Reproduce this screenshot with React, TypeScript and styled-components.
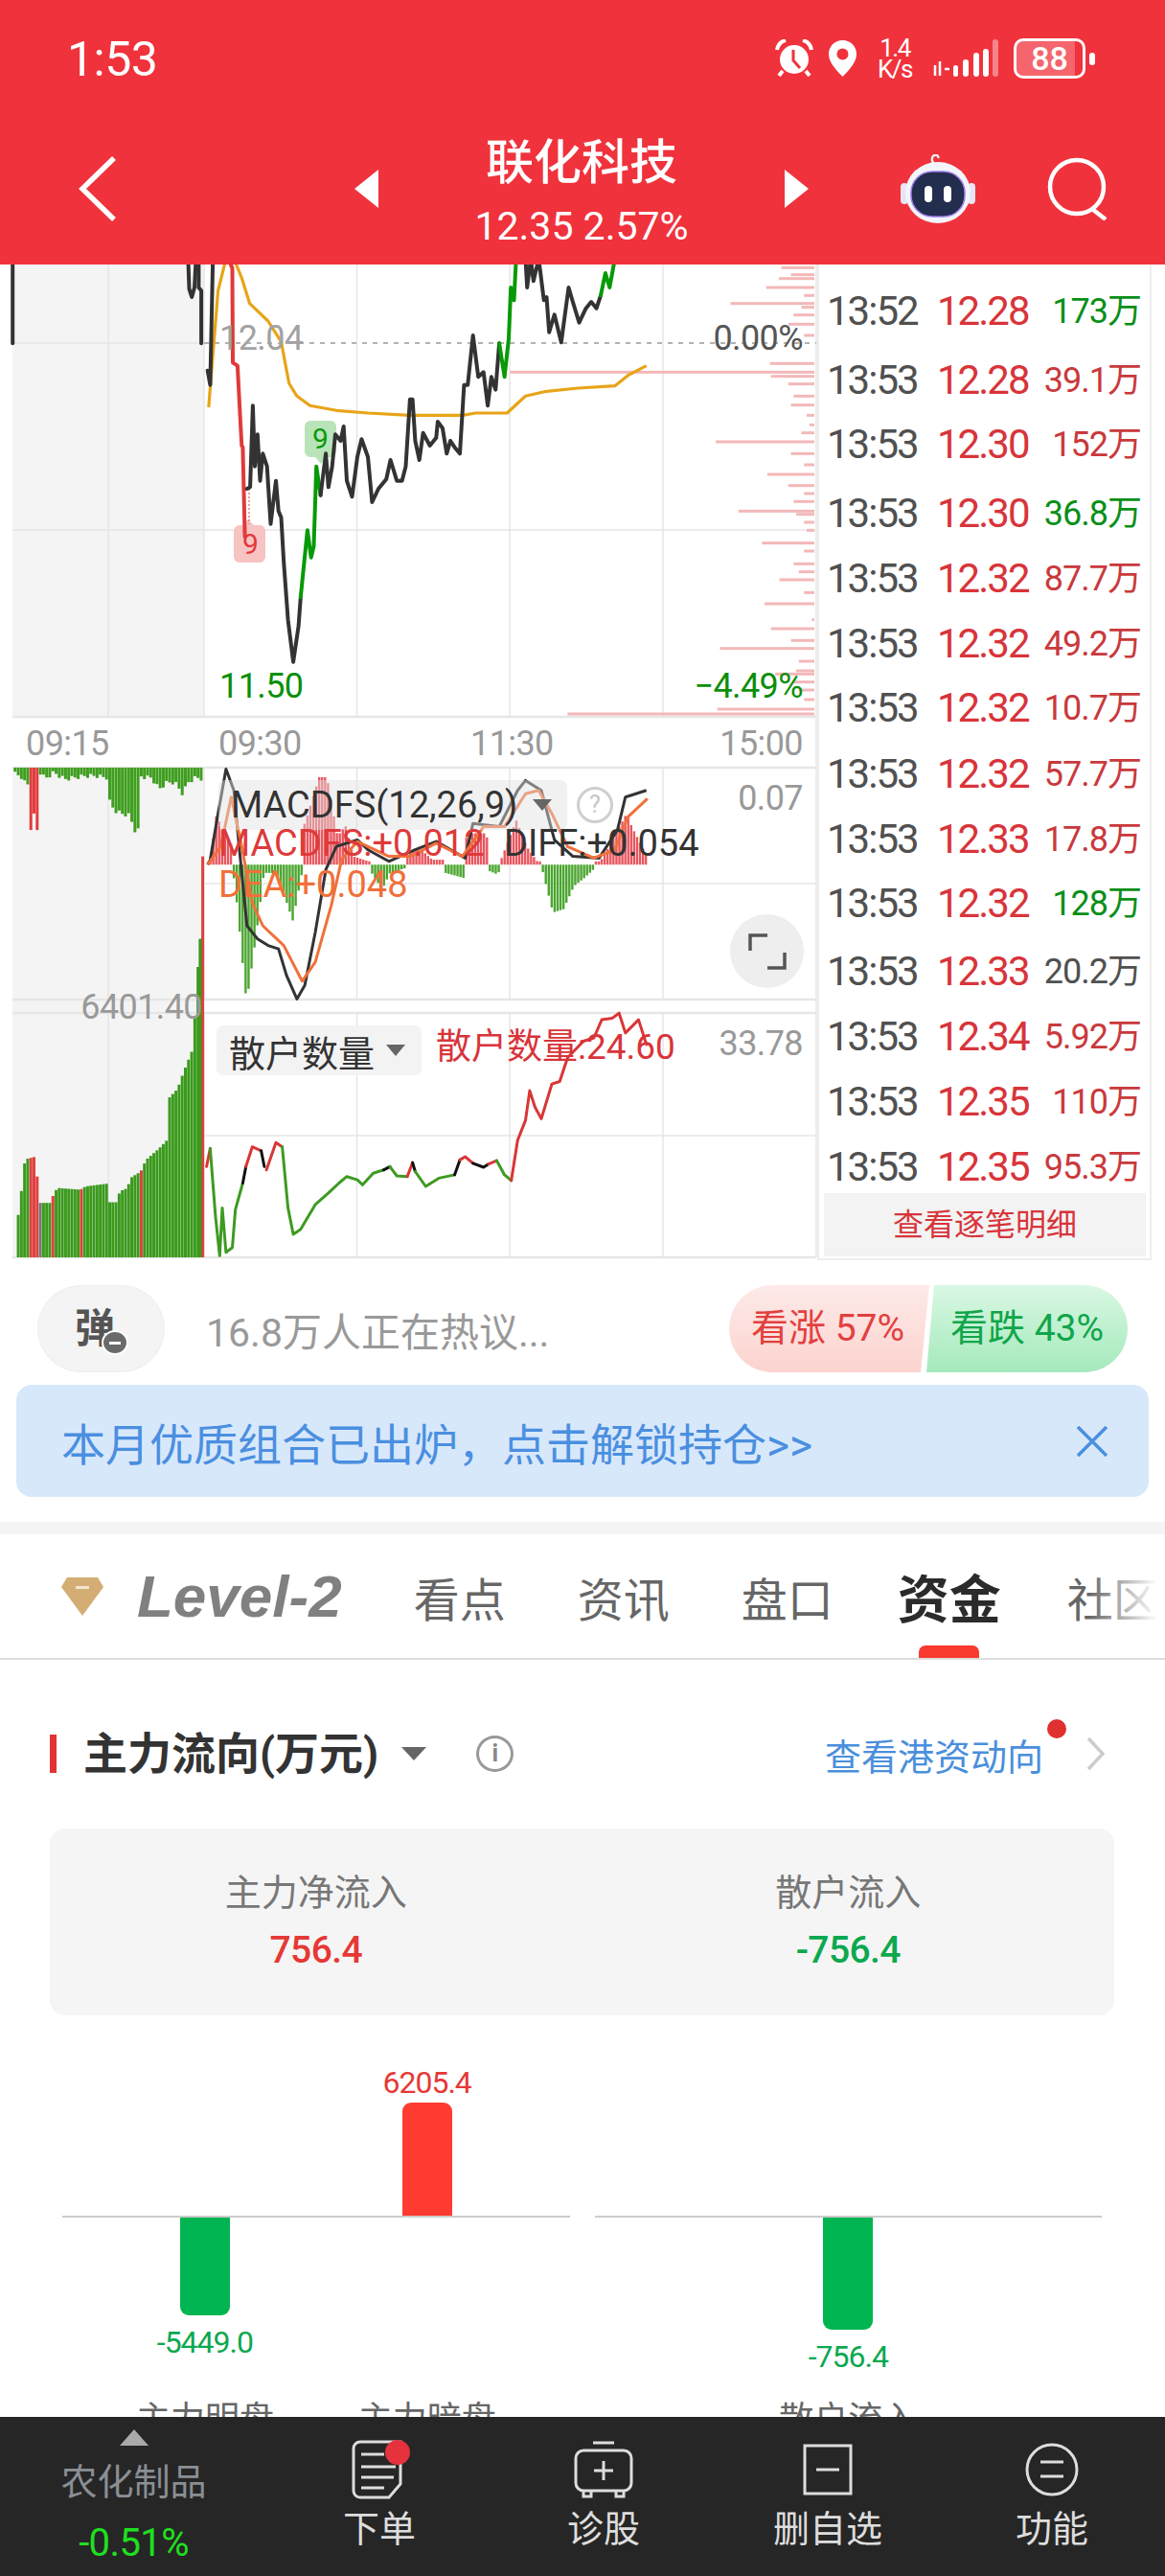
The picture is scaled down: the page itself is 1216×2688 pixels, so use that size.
import React from "react";
import styled, { createGlobalStyle } from "styled-components";

const Global = createGlobalStyle`
  html, body { margin: 0; padding: 0; background: #fff; }
  body { font-family: Roboto, "Noto Sans CJK SC", sans-serif; }
  * { box-sizing: border-box; }
`;

const Page = styled.div`
  width: 1216px; height: 2688px; display: flex; flex-direction: column; overflow: hidden; background: #fff;
`;
const Scroll = styled.div`
  flex: 1; min-height: 0; overflow: hidden;
`;

/* ---------- header ---------- */
const Header = styled.header`
  height: 276px; background: #f0323c; color: #fff; display: flex; flex-direction: column;
`;
const StatusBar = styled.div`
  height: 118px; padding: 40px 74px 0 70px; display: flex; align-items: flex-start; justify-content: space-between;
`;
const Clock = styled.div`
  font-size: 50px; line-height: 44px; letter-spacing: -0.5px;
`;
const StatusIcons = styled.div`
  display: flex; align-items: center; height: 42px;
`;
const StatusIcon = styled.svg<{ $ml?: number }>`
  display: block; margin-left: ${(p) => p.$ml ?? 0}px;
`;
const Speed = styled.div`
  margin-left: 20px; width: 38px; font-size: 26px; line-height: 22px; text-align: center; letter-spacing: -1.5px;
`;
const Battery = styled.div`
  position: relative; margin-left: 16px; width: 75px; height: 42px; border: 3px solid #fff; border-radius: 10px;
  font-size: 34px; font-weight: 500; line-height: 36px; text-align: center;
  &::before { content: ""; position: absolute; left: 0; top: 0; bottom: 0; width: 88%; background: rgba(255,255,255,.25); border-radius: 6px 0 0 6px; }
  &::after { content: ""; position: absolute; right: -13px; top: 12px; width: 6px; height: 13px; background: #fff; border-radius: 3px; }
`;
const BatteryText = styled.span`
  position: relative;
`;
const StatusEnd = styled.div`
  width: 9px;
`;
const NavBar = styled.div`
  height: 158px; display: flex; align-items: center;
`;
const NavIcon = styled.svg<{ $ml: number }>`
  display: block; flex: none; margin-left: ${(p) => p.$ml}px;
`;
const Switcher = styled.div`
  margin-left: 248px; width: 474px; display: flex; align-items: center; justify-content: space-between;
`;
const TitleBlock = styled.div`
  text-align: center; margin-top: 6px;
`;
const StockName = styled.div`
  font-size: 50px; line-height: 58px; font-weight: 500;
`;
const StockQuote = styled.div`
  font-size: 41px; line-height: 46px; margin-top: 14px;
`;

/* ---------- chart + ticks ---------- */
const MarketRow = styled.section`
  height: 1039px; display: flex;
`;
const ChartPane = styled.div`
  position: relative; width: 853px; height: 1039px; flex: none; overflow: hidden;
`;
const ChartSvg = styled.svg`
  display: block;
`;
const ChartText = styled.span<{ $l?: number; $r?: number; $t: number; $c: string; $s?: number; $w?: number }>`
  position: absolute; top: ${(p) => p.$t}px;
  ${(p) => (p.$l !== undefined ? `left:${p.$l}px;` : `right:${p.$r}px;`)}
  color: ${(p) => p.$c}; font-size: ${(p) => p.$s ?? 36}px; line-height: 1; font-weight: ${(p) => p.$w ?? 400}; white-space: nowrap;
`;
const TightNum = styled(ChartText)`
  letter-spacing: -0.6px;
`;
const IndicatorChip = styled.div<{ $l: number; $t: number; $w: number; $h: number; $ghost?: boolean }>`
  position: absolute; left: ${(p) => p.$l}px; top: ${(p) => p.$t}px; width: ${(p) => p.$w}px; height: ${(p) => p.$h}px;
  background: ${(p) => (p.$ghost ? "rgba(225,225,225,.45)" : "#f3f3f3")}; border-radius: 7px;
  display: flex; align-items: center; padding-left: 13px; color: #333; font-size: 38px; white-space: nowrap;
`;
const ChipCaret = styled.i<{ $ml: number }>`
  display: block; margin-left: ${(p) => p.$ml}px; width: 0; height: 0;
  border-left: 10px solid transparent; border-right: 10px solid transparent; border-top: 12px solid #666;
`;
const HelpCircle = styled.div`
  position: absolute; left: 602px; top: 545px; width: 38px; height: 38px; border-radius: 50%;
  border: 3px solid #cfcfcf; color: #c6c6c6; font-size: 25px; line-height: 32px; text-align: center;
`;
const ExpandButton = styled.div`
  position: absolute; left: 762px; top: 678px; width: 77px; height: 77px; border-radius: 50%; background: #eeeeee;
  display: flex; align-items: center; justify-content: center;
`;

const TickColumn = styled.div`
  width: 349px; height: 1039px; flex: none; border-left: 2px solid #eee; border-right: 2px solid #eee; border-bottom: 2px solid #eee;
  padding-top: 31px; display: flex; flex-direction: column;
`;
const TickRow = styled.div<{ $h: number }>`
  flex: none; height: ${(p) => p.$h}px; display: grid; grid-template-columns: 115px 1fr auto; padding: 0 9px 0 8px; line-height: 36px;
`;
const TickTime = styled.span`
  font-size: 42px; letter-spacing: -2px; color: #505050;
`;
const TickPrice = styled.span`
  font-size: 42px; letter-spacing: -2px; color: #d8343a;
`;
const TickVol = styled.span<{ $c: string }>`
  font-size: 36px; letter-spacing: -1px; color: ${(p) => p.$c};
`;
const DetailButton = styled.div`
  margin: auto 4px 2px 5px; height: 66px; background: #f3f3f3; color: #d8343a; font-size: 32px; line-height: 66px; text-align: center;
`;

/* ---------- social ---------- */
const SocialRow = styled.div`
  margin-top: 26px; height: 91px; display: flex; align-items: center; padding: 0 39px;
`;
const DanmuButton = styled.div`
  position: relative; width: 133px; height: 91px; border-radius: 46px; background: #f4f4f4; border: 1px solid #eee;
  color: #555; font-size: 42px; font-weight: 700; line-height: 89px; padding-left: 38px;
`;
const DanmuBadge = styled.i`
  position: absolute; left: 66px; top: 46px; width: 28px; height: 26px; border-radius: 50%; background: #6a6a6a; border: 2px solid #fff;
  &::after { content: ""; position: absolute; left: 6px; right: 6px; top: 10px; height: 3px; background: #fff; }
`;
const HotText = styled.div`
  margin-left: 43px; font-size: 41px; color: #999; white-space: nowrap;
`;
const Sentiment = styled.div`
  margin-left: auto; display: flex; height: 91px;
`;
const BullSide = styled.div`
  width: 209px; border-radius: 46px 0 0 46px; background: linear-gradient(#fdeae8, #fcd3cf);
  clip-path: polygon(0 0, 100% 0, calc(100% - 9px) 100%, 0 100%);
  color: #e2403e; font-size: 39px; line-height: 91px; padding-left: 23px; white-space: nowrap;
`;
const BearSide = styled.div`
  margin-left: -3px; width: 210px; border-radius: 0 46px 46px 0; background: linear-gradient(#daf8e4, #a4e9bb);
  clip-path: polygon(8px 0, 100% 0, 100% 100%, 0 100%);
  color: #10a54b; font-size: 39px; line-height: 91px; padding-left: 25px; white-space: nowrap;
`;
const Banner = styled.div`
  margin: 13px 17px 0; height: 117px; border-radius: 16px; background: #d8e8fb; display: flex; align-items: center;
  justify-content: space-between; padding: 0 42px 0 47px; color: #4a8fe0; font-size: 46px; white-space: nowrap;
`;
const Separator = styled.div`
  margin-top: 26px; height: 13px; background: #f4f4f4;
`;

/* ---------- tabs ---------- */
const TabBar = styled.nav`
  position: relative; height: 131px; border-bottom: 2px solid #ddd; display: flex; align-items: center; padding-left: 64px; overflow: hidden;
  &::after { content: ""; position: absolute; right: 0; top: 0; bottom: 0; width: 80px; background: linear-gradient(90deg, rgba(255,255,255,0), #fff 90%); }
`;
const Diamond = styled.svg`
  display: block; flex: none;
`;
const LevelMark = styled.span`
  flex: none; margin-left: 35px; margin-right: 75px; font-family: "Liberation Sans", sans-serif; font-size: 62px; font-weight: 700; font-style: italic; color: #808080; white-space: nowrap;
`;
const Tab = styled.span<{ $active?: boolean }>`
  position: relative; flex: none; height: 129px; display: flex; align-items: center; margin-right: 75px;
  font-size: ${(p) => (p.$active ? 54 : 48)}px; font-weight: ${(p) => (p.$active ? 700 : 400)}; color: ${(p) => (p.$active ? "#2b2b2b" : "#666")};
  ${(p) => (p.$active ? "margin-left:-8px; margin-right:69px;" : "")}
`;
const TabMark = styled.i`
  position: absolute; left: 22px; right: 23px; bottom: 0; height: 13px; background: #f93a2f; border-radius: 7px 7px 0 0;
`;

/* ---------- funds ---------- */
const FundSection = styled.section`
  padding: 78px 53px 0 52px;
`;
const FundHead = styled.div`
  height: 40px; display: flex; align-items: center; border-left: 7px solid #e03333; padding: 0 8px 0 28px;
`;
const FundTitle = styled.h2`
  margin: 0; font-size: 46px; font-weight: 700; color: #333; line-height: 40px; white-space: nowrap;
`;
const TitleCaret = styled.i`
  display: block; margin-left: 24px; width: 0; height: 0; border-left: 13px solid transparent; border-right: 13px solid transparent; border-top: 14px solid #666;
`;
const InfoCircle = styled.div`
  margin-left: 52px; width: 39px; height: 38px; border-radius: 50%; border: 3px solid #999; color: #888; font-size: 25px; font-weight: 700; line-height: 32px; text-align: center;
`;
const HarborLink = styled.div`
  position: relative; margin-left: auto; display: flex; align-items: center; color: #4a8fdc; font-size: 38px; white-space: nowrap;
`;
const RedDot = styled.i`
  position: absolute; left: 232px; top: -9px; width: 20px; height: 20px; border-radius: 50%; background: #e03030;
`;
const LinkChevron = styled.svg`
  display: block; margin-left: 44px;
`;
const Summary = styled.div`
  margin-top: 58px; height: 195px; border-radius: 16px; background: #f5f5f5; display: grid; grid-template-columns: 1fr 1fr; padding-top: 44px; text-align: center;
`;
const SummaryLabel = styled.div`
  font-size: 38px; line-height: 46px; color: #777;
`;
const SummaryValue = styled.div<{ $c: string }>`
  margin-top: 17px; font-size: 39px; line-height: 40px; letter-spacing: -0.6px; font-weight: 500; color: ${(p) => p.$c};
`;
const BarsRow = styled.div`
  display: flex; gap: 26px; padding: 0 13px;
`;
const BarPanel = styled.div<{ $cols: number; $pad: number }>`
  width: 530px; display: grid; grid-template-columns: repeat(${(p) => p.$cols}, 1fr); padding: 0 ${(p) => p.$pad}px;
  background: linear-gradient(#ccc, #ccc) 0 209px / 100% 2px no-repeat;
`;
const BarCol = styled.div`
  display: flex; flex-direction: column; align-items: center;
`;
const UpperHalf = styled.div`
  height: 209px; display: flex; flex-direction: column; justify-content: flex-end; align-items: center;
`;
const LowerHalf = styled.div`
  margin-top: 2px; height: 193px; display: flex; flex-direction: column; align-items: center;
`;
const BarValue = styled.div<{ $c: string }>`
  font-size: 32px; line-height: 32px; letter-spacing: -1px; color: ${(p) => p.$c}; margin: 12px 0 5px;
`;
const Bar = styled.div<{ $h: number; $up?: boolean }>`
  width: 52px; height: ${(p) => p.$h}px; background: ${(p) => (p.$up ? "#ff3b30" : "#00b551")};
  border-radius: ${(p) => (p.$up ? "9px 9px 0 0" : "0 0 9px 9px")};
`;
const BarLabel = styled.div`
  font-size: 36px; line-height: 36px; color: #666; white-space: nowrap;
`;

/* ---------- footer ---------- */
const Footer = styled.footer`
  flex: none; height: 166px; background: #262626; display: grid; grid-template-columns: 279px repeat(4, 234px);
`;
const SectorCell = styled.div`
  display: flex; flex-direction: column; align-items: center; padding-top: 13px;
`;
const UpCaret = styled.i`
  display: block; width: 0; height: 0; border-left: 15px solid transparent; border-right: 15px solid transparent; border-bottom: 17px solid #aaa;
`;
const SectorName = styled.div`
  margin-top: 15px; font-size: 38px; line-height: 46px; color: #8a8f94;
`;
const SectorChange = styled.div`
  margin-top: 21px; font-size: 40px; line-height: 40px; letter-spacing: -0.6px; color: #1fe01f;
`;
const ActionCell = styled.div`
  position: relative; display: flex; flex-direction: column; align-items: center; padding-top: 24px;
`;
const ActionIconBox = styled.div`
  height: 62px; display: flex; align-items: center; justify-content: center;
`;
const ActionLabel = styled.div`
  margin-top: 8px; font-size: 38px; line-height: 46px; color: #ddd; white-space: nowrap;
`;
const ActionDot = styled.i`
  position: absolute; left: 123px; top: 24px; width: 26px; height: 26px; border-radius: 50%; background: #e5323c;
`;

/* ---------- chart data (page space) ---------- */
type P = [number, number];
const X = 1.823;
const a = (x: number, y: number): P => [x / X, 270 + y / 3 - 276];
const b = (x: number, y: number): P => [x / X, 780 + y / 2.904 - 276];
const path = (arr: number[], f: (x: number, y: number) => P) => {
  const o: string[] = [];
  for (let i = 0; i < arr.length; i += 2) {
    const [x, y] = f(arr[i], arr[i + 1]);
    o.push(`${x.toFixed(1)},${y.toFixed(1)}`);
  }
  return o.join(" ");
};
const interp = (prof: number[], x: number) => {
  for (let i = 0; i < prof.length - 2; i += 2) {
    if (x >= prof[i] && x <= prof[i + 2]) {
      const t = (x - prof[i]) / Math.max(1, prof[i + 2] - prof[i]);
      return prof[i + 1] + (prof[i + 3] - prof[i + 1]) * t;
    }
  }
  return null;
};

const RED = "#e03a3a", GREEN = "#079a07", INK = "#333333";
const priceSegs: [string, number[]][] = [
  [INK, [24, 0, 24, 265]],
  [INK, [358, 0, 360, 95, 365, 120, 370, 90, 373, 0]],
  [INK, [378, 0, 378, 90, 383, 100, 383, 265]],
  [INK, [395, 350, 400, 395, 405, 0]],
  [RED, [435, 0, 442, 30, 443, 325, 452, 335, 458, 525, 460, 585, 462, 590, 466, 870]],
  [INK, [470, 720, 476, 715, 481, 460, 485, 650, 490, 550, 495, 695, 500, 610, 508, 650, 515, 830, 525, 695, 530, 790, 535, 810, 540, 950, 548, 1130, 558, 1262, 568, 1150, 572, 1060]],
  [GREEN, [572, 1060, 585, 850, 592, 935, 597, 900, 602, 650, 610, 740]],
  [INK, [610, 740, 620, 610, 625, 715, 632, 650, 638, 550, 648, 570, 654, 525, 660, 695, 670, 745, 680, 620, 688, 565, 700, 620, 708, 762, 720, 720, 735, 690, 743, 630, 755, 695, 765, 695, 772, 650, 780, 440, 785, 440, 790, 570, 798, 630, 805, 545, 818, 585, 830, 560, 833, 510, 842, 530, 850, 610, 857, 570, 865, 590, 875, 610, 883, 395, 890, 395, 900, 240, 910, 370, 920, 355, 928, 460, 935, 370, 943, 410, 950, 265]],
  [GREEN, [950, 265, 960, 370, 968, 250, 972, 90, 978, 130, 982, 0]],
  [INK, [1000, 0, 1003, 90, 1010, 0, 1015, 70, 1025, 0, 1035, 130, 1040, 120, 1045, 230, 1055, 175, 1068, 262, 1082, 90, 1090, 135, 1102, 200, 1115, 155, 1125, 135, 1135, 155, 1143, 115]],
  [GREEN, [1143, 115, 1152, 45, 1160, 90, 1170, 0]],
];
const avgLine = [397, 465, 405, 300, 415, 100, 430, 0, 445, 0, 460, 60, 475, 140, 510, 195, 535, 260, 550, 390, 565, 430, 590, 460, 640, 475, 700, 483, 780, 490, 880, 490, 905, 483, 965, 483, 1000, 430, 1040, 415, 1100, 405, 1170, 398, 1195, 365, 1230, 335];
const ticks = [28, 1487, 50, 1505, 62, 1482, 90, 1458, 115, 1530, 140, 1390, 152, 1525, 176, 1510, 205, 1500, 240, 1530, 328, 1465, 355, 970, 368, 1467, 392, 1500, 430, 1510, 458, 1505, 490, 1535, 520, 1540, 545, 1525, 573, 1362, 610, 1505, 645, 1530, 675, 1460, 710, 1500, 735, 1530, 760, 1510, 790, 1405, 800, 1515, 825, 1530, 850, 1535, 890, 1450, 915, 1530, 955, 1510, 980, 1520, 1005, 1483, 1045, 1530, 1080, 1455, 1130, 1545, 1158, 1467, 1195, 1505, 1220, 1370, 1260, 1520, 1290, 1515, 1300, 1475, 1325, 1510, 1350, 1520, 1380, 1530, 1410, 1365, 1425, 1080];

const topVol = [24, 72, 40, 85, 47, 110, 54, 100, 70, 62, 83, 88, 100, 70, 120, 90, 140, 85, 160, 80, 180, 80, 200, 85, 205, 155, 215, 185, 230, 195, 245, 200, 252, 245, 260, 245, 262, 80, 275, 85, 285, 85, 300, 120, 315, 100, 330, 100, 345, 135, 355, 100, 370, 85, 385, 90];
const botVol = [28, 1445, 35, 1395, 40, 1310, 45, 1248, 65, 1240, 72, 1380, 95, 1380, 100, 1345, 110, 1335, 150, 1340, 160, 1330, 200, 1322, 205, 1378, 220, 1378, 225, 1345, 240, 1335, 245, 1305, 265, 1285, 275, 1250, 300, 1215, 315, 1190, 320, 1060, 335, 1035, 345, 990, 355, 950, 365, 910, 370, 750, 378, 580, 385, 580];
const macdUp = [398, 340, 410, 200, 420, 250, 440, 300, 500, 330, 560, 300, 580, 220, 605, 90, 620, 90, 640, 270, 655, 235, 670, 330, 700, 345, 770, 330, 785, 310, 800, 310, 820, 340, 840, 340, 860, 345, 890, 260, 920, 260, 950, 345, 980, 220, 1000, 300, 1020, 345, 1140, 345, 1150, 320, 1190, 200, 1200, 240, 1232, 340];
const macdDown = [[440, 360, 450, 490, 465, 745, 470, 740, 480, 630, 490, 510, 500, 380, 520, 380, 535, 430, 555, 525, 570, 400, 575, 360], [705, 380, 725, 430, 740, 380, 770, 365], [845, 380, 880, 395], [930, 375, 945, 385, 950, 365], [1028, 360, 1050, 500, 1070, 490, 1090, 420, 1110, 395, 1130, 365]];
const difLine = [395, 355, 400, 340, 415, 200, 430, 65, 445, 130, 455, 300, 470, 540, 490, 580, 510, 600, 530, 610, 545, 690, 565, 762, 580, 720, 600, 560, 620, 370, 640, 300, 680, 280, 700, 310, 740, 345, 790, 310, 830, 285, 885, 335, 900, 230, 950, 240, 985, 130, 1000, 100, 1030, 130, 1055, 280, 1090, 330, 1140, 335, 1175, 250, 1190, 150, 1230, 130];
const deaLine = [395, 355, 420, 300, 440, 150, 460, 300, 480, 470, 500, 540, 540, 600, 575, 708, 600, 650, 630, 480, 650, 340, 680, 285, 740, 330, 780, 330, 830, 290, 880, 330, 920, 240, 960, 240, 1000, 140, 1025, 130, 1050, 200, 1080, 300, 1130, 335, 1170, 310, 1195, 210, 1232, 155];

const G2 = "#3f9a22", R2 = "#d93636", K2 = "#111";
const retailSegs: [string, number[]][] = [
  [R2, [393, 1270, 400, 1215]],
  [G2, [400, 1215, 410, 1420, 418, 1540, 423, 1395, 430, 1530, 442, 1515, 448, 1400, 462, 1320]],
  [K2, [462, 1320, 468, 1270]],
  [R2, [468, 1270, 480, 1210, 497, 1222]],
  [K2, [497, 1222, 503, 1270]],
  [R2, [507, 1280, 525, 1197, 537, 1210]],
  [G2, [537, 1210, 548, 1395, 558, 1475, 572, 1460, 585, 1425, 600, 1385, 625, 1350, 645, 1320, 660, 1300, 680, 1310, 690, 1325, 710, 1290, 730, 1280]],
  [K2, [730, 1280, 742, 1270]],
  [G2, [742, 1270, 755, 1298, 775, 1300]],
  [R2, [775, 1300, 785, 1258]],
  [K2, [785, 1258, 790, 1285]],
  [G2, [790, 1285, 810, 1330, 835, 1305, 865, 1295]],
  [K2, [865, 1295, 875, 1250]],
  [R2, [875, 1250, 885, 1240, 900, 1260]],
  [K2, [900, 1260, 920, 1272, 930, 1262]],
  [R2, [930, 1262, 945, 1252]],
  [G2, [945, 1252, 960, 1295, 973, 1312]],
  [R2, [973, 1312, 985, 1190, 1000, 1130, 1008, 1040, 1018, 1090, 1030, 1125, 1050, 1020, 1065, 1012, 1080, 940, 1110, 890, 1130, 880, 1145, 825, 1165, 820, 1178, 805, 1190, 865, 1215, 825, 1230, 900]],
];

const volBars = () => {
  const out: React.ReactElement[] = [];
  let i = 0;
  for (let zx = 26; zx <= 382; zx += 6) {
    const px = zx / X;
    const t = interp(topVol, zx);
    const isRedTop = zx >= 55 && zx <= 68;
    if (t !== null) {
      const by = 780 + (isRedTop ? 200 + (i % 2) * 50 : t + ((i * 7) % 3) * 6) / 2.904 - 276;
      out.push(<rect key={"t" + i} x={px} y={801 - 276} width={3} height={by - 525} fill={isRedTop ? "#e03c3c" : "#3f9e1f"} />);
    }
    const v = interp(botVol, zx);
    const red = (zx >= 56 && zx <= 68) || zx === 26 || zx === 98 || zx === 152 || zx === 266;
    if (v !== null) {
      const ty = 780 + v / 2.904 - 276;
      out.push(<rect key={"b" + i} x={px} y={ty} width={3} height={1036 - ty} fill={red ? "#e04040" : zx === 74 ? "#777" : "#3a9a1c"} />);
    }
    i++;
  }
  out.push(<rect key="spike" x={383 / X} y={780 + 330 / 2.904 - 276} width={3} height={1036 - (780 + 330 / 2.904 - 276)} fill="#e04040" />);
  out.push(<rect key="spike2" x={378 / X} y={780 + 580 / 2.904 - 276} width={3} height={1036 - (780 + 580 / 2.904 - 276)} fill="#3a9a1c" />);
  return out;
};

const macdBars = () => {
  const out: React.ReactElement[] = [];
  const base = 780 + 355 / 2.904 - 276;
  let i = 0;
  for (let zx = 398; zx <= 1232; zx += 5.6) {
    const v = interp(macdUp, zx);
    let isDown = false;
    for (const seg of macdDown) {
      const d = interp(seg, zx);
      if (d !== null) {
        isDown = true;
        const y = 780 + d / 2.904 - 276;
        out.push(<rect key={"d" + i} x={zx / X} y={base} width={2.4} height={Math.max(0, y - base)} fill="#4aa52f" />);
      }
    }
    if (!isDown && v !== null) {
      const y = 780 + v / 2.904 - 276;
      out.push(<rect key={"u" + i} x={zx / X} y={y} width={2.4} height={Math.max(0, base - y)} fill="#e6454e" opacity={0.9} />);
    }
    i++;
  }
  return out;
};

const Lines = ({ segs, f, w }: { segs: [string, number[]][]; f: (x: number, y: number) => P; w: number }) => (
  <>
    {segs.map(([c, arr], i) => (
      <polyline key={i} points={path(arr, f)} fill="none" stroke={c} strokeWidth={w} strokeLinejoin="round" strokeLinecap="round" />
    ))}
  </>
);

const Chart = () => {
  const grid = "#e6e6e6";
  const top = (y: number) => y - 276;
  return (
    <ChartSvg width={853} height={1039} viewBox="0 0 853 1039">
      <rect x={13} y={0} width={200} height={top(748)} fill="#f4f4f4" />
      <rect x={13} y={top(801)} width={199} height={top(1312) - top(801)} fill="#f4f4f4" />
      {[113, 213, 372.5, 532, 692].map((x) => (
        <g key={x}>
          <line x1={x} x2={x} y1={0} y2={top(748)} stroke={grid} strokeWidth={1.5} />
          <line x1={x} x2={x} y1={top(801)} y2={top(1043)} stroke={grid} strokeWidth={1.5} />
          <line x1={x} x2={x} y1={top(1057)} y2={top(1312)} stroke={grid} strokeWidth={1.5} />
        </g>
      ))}
      <line x1={852} x2={852} y1={0} y2={top(1312)} stroke={grid} strokeWidth={1.5} />
      <line x1={13} x2={213} y1={top(358)} y2={top(358)} stroke={grid} strokeWidth={1.5} />
      <line x1={213} x2={852} y1={top(358)} y2={top(358)} stroke="#999" strokeWidth={1.5} strokeDasharray="5 6" />
      {[553, 748].map((y) => <line key={y} x1={13} x2={852} y1={top(y)} y2={top(y)} stroke={grid} strokeWidth={y === 748 ? 2.5 : 1.5} />)}
      {[801, 922, 1043, 1057, 1185, 1312].map((y) => <line key={y} x1={y === 922 || y === 1185 ? 213 : 13} x2={852} y1={top(y)} y2={top(y)} stroke={grid} strokeWidth={y === 922 || y === 1185 ? 1.5 : 2.5} />)}
      {ticks.map((_, i) => {
        if (i % 2) return null;
        const [x, y] = a(ticks[i + 1], ticks[i]);
        const w = 850 - x;
        return <rect key={i} x={x} y={y - 1.5} width={w} height={3} fill="#f3b8b8" />;
      })}
      <path d="M324 163h21a6 6 0 0 1 6 6v26a6 6 0 0 1-6 6h-4l-6 7-6-7h-5a6 6 0 0 1-6-6v-26a6 6 0 0 1 6-6z" fill="#b9e4b9" />
      <path d="M250 272h3l6-6 6 6h6a6 6 0 0 1 6 6v27a6 6 0 0 1-6 6h-21a6 6 0 0 1-6-6v-27a6 6 0 0 1 6-6z" fill="#f7c3c3" />
      <line x1={260} x2={260} y1={a(0, 720)[1]} y2={a(0, 830)[1]} stroke="#e03a3a" strokeWidth={1} strokeDasharray="2 2" />
      <polyline points={path(avgLine, a)} fill="none" stroke="#e8a418" strokeWidth={3.2} strokeLinejoin="round" />
      <Lines segs={priceSegs} f={a} w={4} />
      {volBars()}
      {macdBars()}
      <polyline points={path(difLine, b)} fill="none" stroke="#333" strokeWidth={3} strokeLinejoin="round" />
      <polyline points={path(deaLine, b)} fill="none" stroke="#f0703a" strokeWidth={3} strokeLinejoin="round" />
      <Lines segs={retailSegs} f={b} w={3} />
    </ChartSvg>
  );
};

const tickData: [string, string, string, string, number][] = [
  ["13:52", "12.28", "173万", "#0b8f18", 72],
  ["13:53", "12.28", "39.1万", "#c9393c", 67],
  ["13:53", "12.30", "152万", "#c9393c", 72],
  ["13:53", "12.30", "36.8万", "#0b8f18", 68],
  ["13:53", "12.32", "87.7万", "#c9393c", 68],
  ["13:53", "12.32", "49.2万", "#c9393c", 67],
  ["13:53", "12.32", "10.7万", "#c9393c", 69],
  ["13:53", "12.32", "57.7万", "#c9393c", 68],
  ["13:53", "12.33", "17.8万", "#c9393c", 67],
  ["13:53", "12.32", "128万", "#0b8f18", 71],
  ["13:53", "12.33", "20.2万", "#505050", 68],
  ["13:53", "12.34", "5.92万", "#c9393c", 68],
  ["13:53", "12.35", "110万", "#c9393c", 68],
  ["13:53", "12.35", "95.3万", "#c9393c", 36],
];

const App = () => (
  <Page>
    <Global />
    <Scroll>
      <Header>
        <StatusBar>
          <Clock>1:53</Clock>
          <StatusIcons>
            <StatusIcon width={40} height={40} viewBox="0 0 40 40">
              <path d="M2 11 C3 5 7 2 11 1 M38 11 C37 5 33 2 29 1" stroke="#fff" strokeWidth="4" fill="none" />
              <circle cx="20" cy="21" r="15" fill="#fff" />
              <path d="M19 11v11l7 8" stroke="#f0323c" strokeWidth="3" fill="none" />
              <path d="M8 33l-4 5M32 33l4 5" stroke="#fff" strokeWidth="4" />
            </StatusIcon>
            <StatusIcon $ml={15} width={31} height={40} viewBox="0 0 31 40">
              <path d="M15.5 1C7 1 1 7.5 1 15.5 1 25 10 33 15.5 39 21 33 30 25 30 15.5 30 7.5 24 1 15.5 1z" fill="#fff" />
              <circle cx="15.5" cy="15.5" r="6" fill="#f0323c" />
            </StatusIcon>
            <Speed>1.4<br />K/s</Speed>
            <StatusIcon $ml={20} width={69} height={42} viewBox="0 0 69 42">
              <path d="M3 28v11M8 24v15M13 32h5" stroke="#fff" strokeWidth="2.5" fill="none" />
              <rect x="22" y="28" width="5" height="12" rx="2.5" fill="#fff" />
              <rect x="32" y="22" width="6" height="18" rx="3" fill="#fff" />
              <rect x="43" y="15" width="6" height="25" rx="3" fill="#fff" />
              <rect x="53" y="11" width="6" height="29" rx="3" fill="#fff" />
              <rect x="63" y="1" width="6" height="39" rx="3" fill="#fff" fillOpacity=".4" />
            </StatusIcon>
            <Battery><BatteryText>88</BatteryText></Battery>
            <StatusEnd />
          </StatusIcons>
        </StatusBar>
        <NavBar>
          <NavIcon $ml={81} width={41} height={70} viewBox="0 0 41 70">
            <path d="M38 3 L5 35 L38 67" fill="none" stroke="#fff" strokeWidth="5.5" />
          </NavIcon>
          <Switcher>
            <svg width={25} height={40} viewBox="0 0 25 40"><path d="M25 0v40L0 20z" fill="#fff" /></svg>
            <TitleBlock>
              <StockName>联化科技</StockName>
              <StockQuote>12.35 2.57%</StockQuote>
            </TitleBlock>
            <svg width={25} height={40} viewBox="0 0 25 40"><path d="M0 0v40l25-20z" fill="#fff" /></svg>
          </Switcher>
          <NavIcon $ml={96} width={78} height={73} viewBox="0 0 78 73">
            <path d="M35 10c-3-3-3-7 0-9 3-1 5 1 4 3" fill="none" stroke="#eee" strokeWidth="2.5" />
            <rect x="0" y="30" width="8" height="22" rx="4" fill="#e6e6f5" />
            <rect x="70" y="30" width="8" height="22" rx="4" fill="#e6e6f5" />
            <ellipse cx="39" cy="40" rx="34" ry="32" fill="#f4f4fb" />
            <rect x="11" y="18" width="56" height="47" rx="22" fill="#232d4e" stroke="#9b7ee8" strokeWidth="1.5" />
            <rect x="25" y="33" width="8" height="17" rx="4" fill="#fff" />
            <rect x="45" y="33" width="8" height="17" rx="4" fill="#fff" />
          </NavIcon>
          <NavIcon $ml={75} width={64} height={66} viewBox="0 0 64 66">
            <circle cx="31" cy="31" r="28" fill="none" stroke="#fff" strokeWidth="4.5" />
            <path d="M47 54l14 11" stroke="#fff" strokeWidth="4.5" />
          </NavIcon>
        </NavBar>
      </Header>

      <MarketRow>
        <ChartPane>
          <Chart />
          <TightNum $l={229} $t={59} $c="#a2a2a2">12.04</TightNum>
          <TightNum $r={15} $t={59} $c="#555">0.00%</TightNum>
          <TightNum $l={229} $t={422} $c="#0a8f0a">11.50</TightNum>
          <TightNum $r={15} $t={422} $c="#0a8f0a">−4.49%</TightNum>
          <ChartText $l={326} $t={167} $c="#0a9a0a" $s={30}>9</ChartText>
          <ChartText $l={253} $t={277} $c="#e03a3a" $s={30}>9</ChartText>
          <TightNum $l={27} $t={482} $c="#999">09:15</TightNum>
          <TightNum $l={228} $t={482} $c="#999">09:30</TightNum>
          <TightNum $l={491} $t={482} $c="#999">11:30</TightNum>
          <TightNum $r={15} $t={482} $c="#999">15:00</TightNum>

          <IndicatorChip $ghost $l={228} $t={538} $w={364} $h={52}>
            MACDFS(12,26,9)
            <ChipCaret $ml={16} />
          </IndicatorChip>
          <HelpCircle>?</HelpCircle>
          <ChartText $l={228} $t={585} $c="#dd3a3a" $s={38}>MACDFS:+0.012</ChartText>
          <ChartText $l={526} $t={585} $c="#333" $s={38}>DIFF:+0.054</ChartText>
          <ChartText $l={228} $t={628} $c="#f0703a" $s={38}>DEA:+0.048</ChartText>
          <TightNum $r={15} $t={539} $c="#999">0.07</TightNum>
          <ExpandButton>
            <svg width={40} height={38} viewBox="0 0 40 38">
              <path d="M20 2H2v16M20 36h18V20" fill="none" stroke="#555" strokeWidth="3.5" />
            </svg>
          </ExpandButton>
          <TightNum $r={642} $t={757} $c="#999" $s={36}>6401.40</TightNum>
          <IndicatorChip $l={226} $t={794} $w={214} $h={52}>
            散户数量
            <ChipCaret $ml={12} />
          </IndicatorChip>
          <ChartText $l={455} $t={798} $c="#d8343a" $s={37}>散户数量:24.60</ChartText>
          <TightNum $r={15} $t={795} $c="#999">33.78</TightNum>
        </ChartPane>
        <TickColumn>
          {tickData.map(([t, p, v, c, h], i) => (
            <TickRow key={i} $h={h}>
              <TickTime>{t}</TickTime>
              <TickPrice>{p}</TickPrice>
              <TickVol $c={c}>{v}</TickVol>
            </TickRow>
          ))}
          <DetailButton>查看逐笔明细</DetailButton>
        </TickColumn>
      </MarketRow>

      <SocialRow>
        <DanmuButton>弹<DanmuBadge /></DanmuButton>
        <HotText>16.8万人正在热议...</HotText>
        <Sentiment>
          <BullSide>看涨 57%</BullSide>
          <BearSide>看跌 43%</BearSide>
        </Sentiment>
      </SocialRow>
      <Banner>
        本月优质组合已出炉，点击解锁持仓&gt;&gt;
        <svg width={34} height={34} viewBox="0 0 34 34"><path d="M2 2l30 30M32 2L2 32" stroke="#4a8fe0" strokeWidth="3.5" /></svg>
      </Banner>
      <Separator />

      <TabBar>
        <Diamond width={44} height={40} viewBox="0 0 44 40">
          <path d="M6 0h32l6 10-22 30L0 10z" fill="#d4ad74" />
          <rect x="15" y="9" width="14" height="3" fill="#f3e4cc" />
        </Diamond>
        <LevelMark>Level-2</LevelMark>
        <Tab>看点</Tab>
        <Tab>资讯</Tab>
        <Tab>盘口</Tab>
        <Tab $active>资金<TabMark /></Tab>
        <Tab>社区</Tab>
      </TabBar>

      <FundSection>
        <FundHead>
          <FundTitle>主力流向(万元)</FundTitle>
          <TitleCaret />
          <InfoCircle>i</InfoCircle>
          <HarborLink>
            查看港资动向
            <RedDot />
            <LinkChevron width={22} height={36} viewBox="0 0 22 36"><path d="M3 2l15 16L3 34" fill="none" stroke="#ccc" strokeWidth="3.5" /></LinkChevron>
          </HarborLink>
        </FundHead>
        <Summary>
          <div>
            <SummaryLabel>主力净流入</SummaryLabel>
            <SummaryValue $c="#e53935">756.4</SummaryValue>
          </div>
          <div>
            <SummaryLabel>散户流入</SummaryLabel>
            <SummaryValue $c="#0ca84f">-756.4</SummaryValue>
          </div>
        </Summary>
        <BarsRow>
          <BarPanel $cols={2} $pad={33}>
            <BarCol>
              <UpperHalf />
              <LowerHalf>
                <Bar $h={102} />
                <BarValue $c="#0ca84f">-5449.0</BarValue>
              </LowerHalf>
              <BarLabel>主力明盘</BarLabel>
            </BarCol>
            <BarCol>
              <UpperHalf>
                <BarValue $c="#e53935">6205.4</BarValue>
                <Bar $up $h={118} />
              </UpperHalf>
              <LowerHalf />
              <BarLabel>主力暗盘</BarLabel>
            </BarCol>
          </BarPanel>
          <BarPanel $cols={1} $pad={0}>
            <BarCol>
              <UpperHalf />
              <LowerHalf>
                <Bar $h={117} />
                <BarValue $c="#0ca84f">-756.4</BarValue>
              </LowerHalf>
              <BarLabel>散户流入</BarLabel>
            </BarCol>
          </BarPanel>
        </BarsRow>
      </FundSection>
    </Scroll>

    <Footer>
      <SectorCell>
        <UpCaret />
        <SectorName>农化制品</SectorName>
        <SectorChange>-0.51%</SectorChange>
      </SectorCell>
      <ActionCell>
        <ActionDot />
        <ActionIconBox>
          <svg width={58} height={62} viewBox="0 0 58 62" fill="none" stroke="#ddd" strokeWidth="3">
            <path d="M9 2h42v44l-12 14H9a7 7 0 0 1-7-7V9a7 7 0 0 1 7-7z" />
            <path d="M10 15h24M10 28h36M10 39h34M10 50h24" />
          </svg>
        </ActionIconBox>
        <ActionLabel>下单</ActionLabel>
      </ActionCell>
      <ActionCell>
        <ActionIconBox>
          <svg width={62} height={60} viewBox="0 0 62 60" fill="none" stroke="#ddd" strokeWidth="3">
            <path d="M20 2h22" />
            <rect x="2" y="10" width="58" height="42" rx="8" />
            <path d="M31 21v20M21 31h20" />
            <path d="M10 52v6h8v-6M44 52v6h8v-6" />
          </svg>
        </ActionIconBox>
        <ActionLabel>诊股</ActionLabel>
      </ActionCell>
      <ActionCell>
        <ActionIconBox>
          <svg width={52} height={54} viewBox="0 0 52 54" fill="none" stroke="#ddd" strokeWidth="3">
            <rect x="2" y="2" width="48" height="50" />
            <path d="M14 27h24" />
          </svg>
        </ActionIconBox>
        <ActionLabel>删自选</ActionLabel>
      </ActionCell>
      <ActionCell>
        <ActionIconBox>
          <svg width={56} height={56} viewBox="0 0 56 56" fill="none" stroke="#ddd" strokeWidth="3">
            <circle cx="28" cy="28" r="26" />
            <path d="M16 20h24M16 35h24" />
          </svg>
        </ActionIconBox>
        <ActionLabel>功能</ActionLabel>
      </ActionCell>
    </Footer>
  </Page>
);

export default App;
